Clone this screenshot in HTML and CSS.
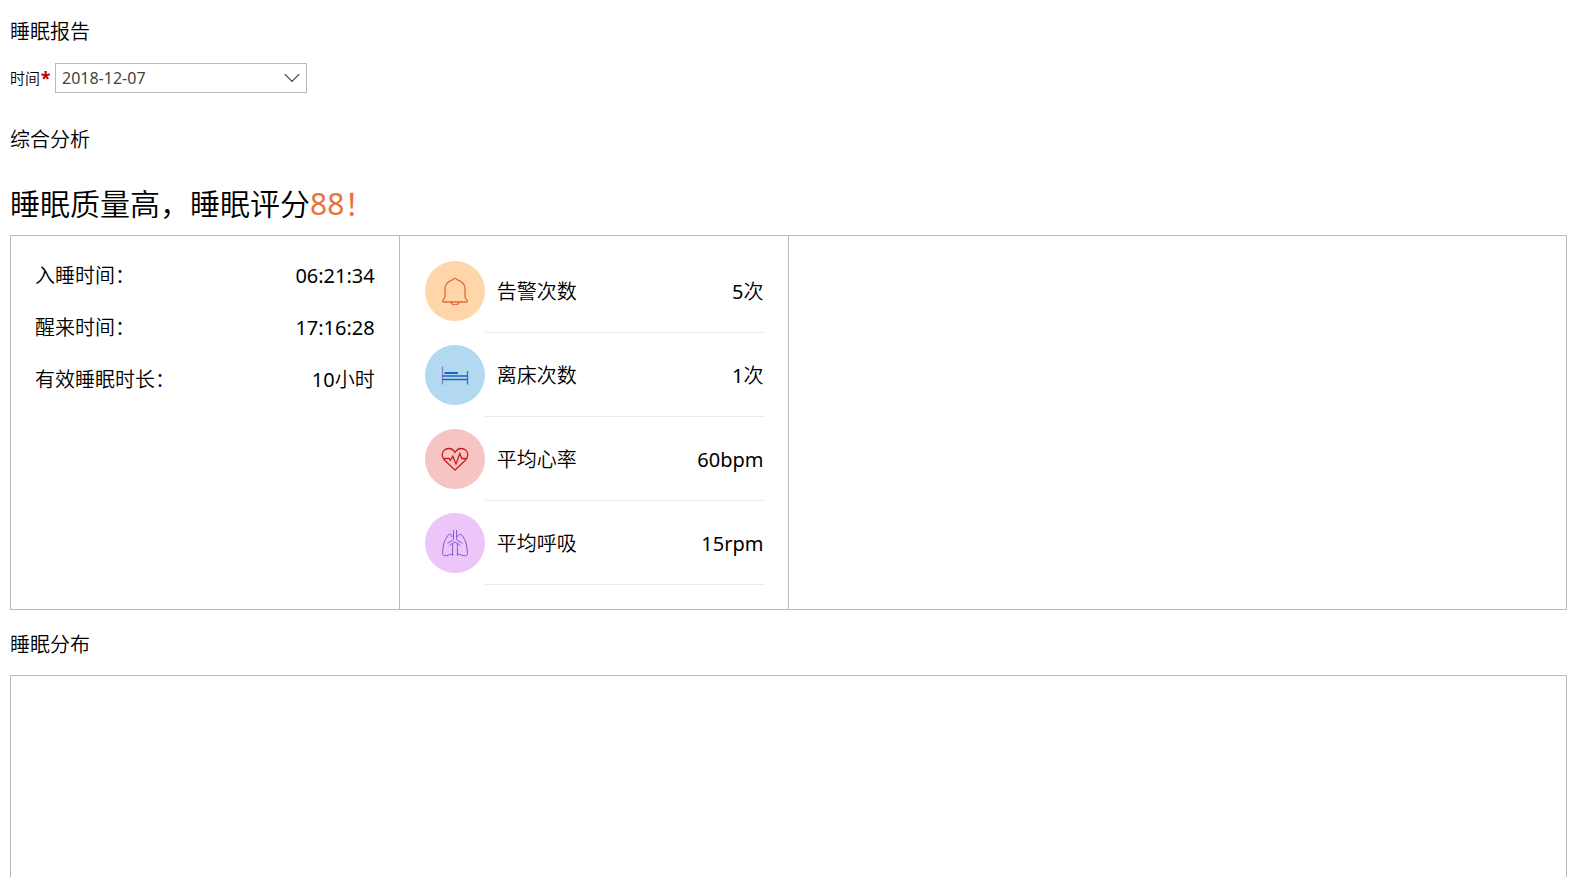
FILE: index.html
```html
<!DOCTYPE html>
<html lang="zh-CN">
<head>
<meta charset="utf-8">
<title>睡眠报告</title>
<link rel="stylesheet" href="styles.css">
</head>
<body>
<main class="report">
  <h1 class="heading">睡眠报告</h1>
  <form class="filter">
    <label class="filter-label" for="date">时间<span class="required">*</span></label>
    <div class="picker">
      <select class="picker-select" id="date" required>
        <option selected>2018-12-07</option>
      </select>
      <svg class="picker-arrow" viewBox="0 0 16 10" aria-hidden="true"><path d="M.8 1.2 8 8.4l7.200-7.200"/></svg>
    </div>
  </form>

  <h2 class="heading heading-analysis">综合分析</h2>
  <p class="summary">睡眠质量高，睡眠评分<span class="score">88！</span></p>
  <section class="panel analysis">
    <dl class="column times">
      <div class="time-row"><dt>入睡时间：</dt><dd class="value">06:21:34</dd></div>
      <div class="time-row"><dt>醒来时间：</dt><dd class="value">17:16:28</dd></div>
      <div class="time-row"><dt>有效睡眠时长：</dt><dd class="value">10<span class="unit">小时</span></dd></div>
    </dl>
    <ul class="column metrics">
      <li class="metric">
        <span class="badge badge-alarm"><svg class="icon" viewBox="0 0 28 28" aria-hidden="true"><path d="M14 1.300c-1 0-1.600.600-2.100 1.300C7.500 4.200 4 6.500 4 11.500v8.200c0 1.300-2.300 2.600-2.300 4.300 0 .800.400 1 1 1h22.600c.600 0 1-.200 1-1 0-1.700-2.300-3-2.300-4.300v-8.200c0-5-3.500-7.300-7.900-8.900-.500-.700-1.100-1.300-2.100-1.300ZM9.700 25c.800 1.900 2.200 2.900 4.300 2.900s3.500-1 4.300-2.900"/></svg></span>
        <div class="metric-body"><span>告警次数</span><span class="value">5<span class="unit">次</span></span></div>
      </li>
      <li class="metric">
        <span class="badge badge-bed"><svg class="icon" viewBox="0 0 28 28" aria-hidden="true"><path class="post" d="M1.500 5.500v18"/><path class="end" d="M26.500 10v13.500"/><path d="M1.500 15h25M1.500 18.500h25"/><path class="pillow" d="M3.500 12h13.500"/></svg></span>
        <div class="metric-body"><span>离床次数</span><span class="value">1<span class="unit">次</span></span></div>
      </li>
      <li class="metric">
        <span class="badge badge-heart"><svg class="icon" viewBox="0 0 28 28" aria-hidden="true"><path d="M14 7.500C12.400 4.800 10.300 3.500 7.800 3.500 4 3.500 1.200 6.300 1.200 9.900c0 2.300 1.200 4.200 3 5.900L14 25.200l9.800-9.400c1.800-1.700 3-3.600 3-5.900 0-3.600-2.800-6.400-6.600-6.400-2.500 0-4.600 1.300-6.200 4Z"/><path d="M2.500 13.500h5.800l1 2 2.500-4.200 3.200 7.700 3.800-10.500 2 5h4.700"/></svg></span>
        <div class="metric-body"><span>平均心率</span><span class="value">60bpm</span></div>
      </li>
      <li class="metric">
        <span class="badge badge-lungs"><svg class="icon" viewBox="0 0 28 28" aria-hidden="true"><path d="M12.500 1v9.200c0 1.500-4.500 2.500-6 4.300M15.500 1v9.200c0 1.500 4.500 2.500 6 4.300M11.600 27V16c0-1.700.900-2.800 2.400-2.800s2.400 1.100 2.400 2.800v11M11.600 24.900c-3 .300-4.500 1.900-8 1.900-1.400 0-2-.900-2-2.300 0-7.200 1.700-13.500 4.900-17.500 1.100-1.400 2.200-2 3.300-1.600.900.300 1.200 1.400 1.200 2.700M16.400 24.900c3 .300 4.500 1.900 8 1.900 1.400 0 2-.900 2-2.300 0-7.200-1.700-13.500-4.900-17.500-1.100-1.400-2.200-2-3.300-1.600-.900.300-1.200 1.400-1.200 2.700M11.600 14l-3 2.600M16.400 14l3 2.600"/></svg></span>
        <div class="metric-body"><span>平均呼吸</span><span class="value">15rpm</span></div>
      </li>
    </ul>
    <div class="chart"></div>
  </section>

  <h2 class="heading heading-distribution">睡眠分布</h2>
  <section class="panel distribution"></section>
</main>
</body>
</html>
```
FILE: styles.css
```css
* {
  box-sizing: border-box;
}

body {
  margin: 0;
  background: #fff;
  color: #000;
  font-family: "Noto Sans", "Noto Sans CJK SC", sans-serif;
  font-size: 20px;
  font-weight: 350;
  line-height: 26px;
}

.report {
  display: flex;
  flex-direction: column;
  min-height: 100vh;
  padding: 19px 3px 0 10px;
}

.heading {
  margin: 0;
  font-size: 20px;
  font-weight: 350;
}

.filter {
  display: flex;
  align-items: center;
  gap: 4px;
  margin-top: 18px;
}

.filter-label {
  display: flex;
  align-items: center;
  font-size: 15px;
}

.required {
  width: 11px;
  color: #b90000;
  font-size: 18px;
  font-weight: 700;
  text-align: center;
}

.picker {
  position: relative;
  width: 252px;
}

.picker-select {
  display: block;
  width: 100%;
  height: 30px;
  padding: 0 30px 0 6px;
  border: 1px solid #bababa;
  border-radius: 0;
  background: #fff;
  color: #444;
  font: inherit;
  font-size: 16px;
  font-weight: 400;
  appearance: none;
}

.picker-arrow {
  position: absolute;
  top: 10px;
  right: 7px;
  width: 16px;
  height: 10px;
  fill: none;
  stroke: #444;
  stroke-width: 1.200;
  pointer-events: none;
}

.heading-analysis {
  margin-top: 34px;
}

.summary {
  margin: 31px 0 11px;
  font-size: 30px;
  line-height: 40px;
}

.score {
  color: #e9713d;
  font-weight: 400;
}

.panel {
  border: 1px solid #bababa;
}

.analysis {
  display: grid;
  grid-template-columns: 1fr 1fr 2fr;
}

.column {
  margin: 0;
  border-right: 1px solid #bababa;
}

.times {
  padding: 14px 24px;
}

.time-row {
  display: flex;
  justify-content: space-between;
  line-height: 52px;
}

.time-row dd {
  margin: 0;
}

.value {
  font-weight: 400;
}

.unit {
  font-weight: 350;
}

.metrics {
  padding: 13px 24px 24px 25px;
  list-style: none;
}

.metric {
  display: flex;
  align-items: center;
  height: 84px;
}

.badge {
  display: grid;
  flex: none;
  place-items: center;
  width: 60px;
  height: 60px;
  border-radius: 50%;
}

.icon {
  width: 28px;
  height: 28px;
  fill: none;
  stroke: currentColor;
  stroke-width: 1.300;
}

.badge-alarm {
  background: #ffd6a9;
  color: #e3693c;
}

.badge-bed {
  background: #b3d9f1;
  color: #1c65bd;
}

.post {
  stroke: #7d84c0;
}

.end {
  stroke: #0e82d8;
}

.pillow {
  stroke-width: 2;
}

.badge-heart {
  background: #f7c4c4;
  color: #cb1919;
}

.badge-lungs {
  background: #ecc5f9;
  color: #8058d0;
}

.badge-lungs .icon {
  stroke-width: 1;
}

.metric-body {
  display: flex;
  flex: 1;
  align-items: center;
  justify-content: space-between;
  height: 84px;
  padding: 2px 0 0 12px;
  border-bottom: 1px solid #ebebeb;
}

.heading-distribution {
  margin: 22px 0 17px;
}

.distribution {
  flex: 1;
  border-bottom: 0;
}
```
